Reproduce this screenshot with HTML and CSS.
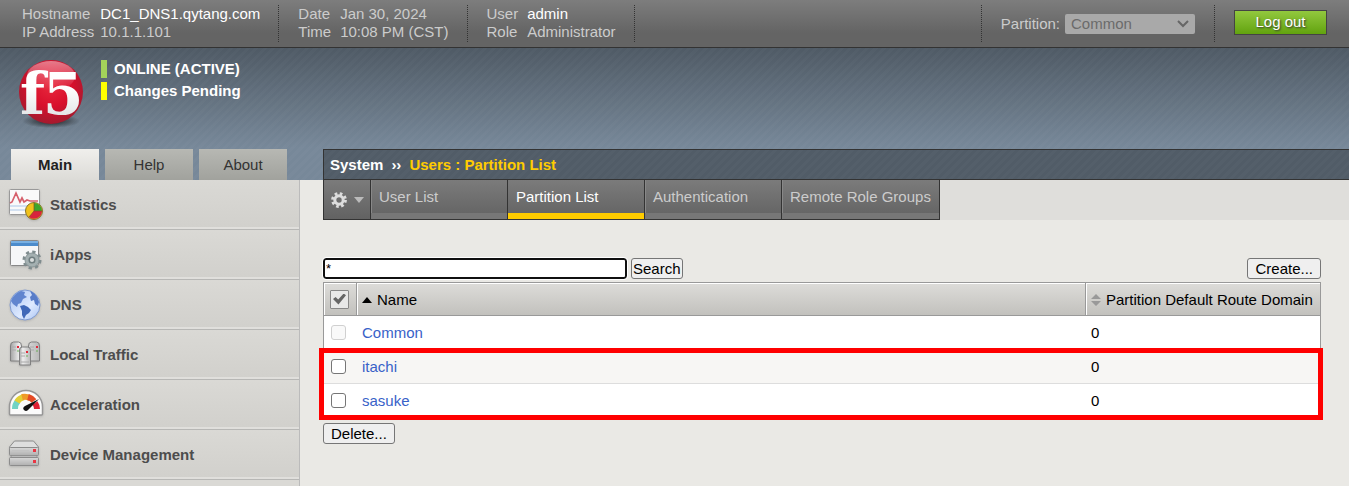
FILE: index.html
```html
<!DOCTYPE html>
<html lang="en">
<head>
<meta charset="utf-8">
<title>System: Users: Partition List</title>
<link rel="stylesheet" href="styles.css">
</head>
<body>
<header class="topbar">
  <dl class="facts host">
    <dt>Hostname</dt><dd class="strong">DC1_DNS1.qytang.com</dd>
    <dt>IP Address</dt><dd>10.1.1.101</dd>
  </dl>
  <dl class="facts">
    <dt>Date</dt><dd>Jan 30, 2024</dd>
    <dt>Time</dt><dd>10:08 PM (CST)</dd>
  </dl>
  <dl class="facts">
    <dt>User</dt><dd class="strong">admin</dd>
    <dt>Role</dt><dd>Administrator</dd>
  </dl>
  <div class="partition">
    <label for="partition">Partition:</label>
    <span class="select-box">
      <select id="partition" disabled><option>Common</option></select>
      <svg class="chevron" width="12" height="8" viewBox="0 0 12 8"><path d="M1 1l5 5 5-5" fill="none" stroke="#666" stroke-width="2"/></svg>
    </span>
  </div>
  <div class="session"><button class="logout" type="button">Log out</button></div>
</header>

<div class="banner">
  <div class="device">
    <svg class="logo" width="76" height="84" viewBox="-2 -8 76 84" role="img" aria-label="f5">
      <defs>
        <radialGradient id="ball" cx="0.5" cy="0.4" r="0.6"><stop offset="0" stop-color="#e8283d"/><stop offset="0.55" stop-color="#d80f2c"/><stop offset="1" stop-color="#a31a2e"/></radialGradient>
        <linearGradient id="gloss" x1="0" y1="0" x2="0" y2="1"><stop offset="0" stop-color="#fff" stop-opacity="0.45"/><stop offset="1" stop-color="#fff" stop-opacity="0"/></linearGradient>
        <linearGradient id="ink" x1="0" y1="0" x2="0" y2="1"><stop offset="0.4" stop-color="#fff"/><stop offset="1" stop-color="#d8dadd"/></linearGradient>
        <radialGradient id="shade"><stop offset="0" stop-color="#111" stop-opacity="0.9"/><stop offset="1" stop-color="#111" stop-opacity="0"/></radialGradient>
      </defs>
      <ellipse cx="34" cy="61" rx="29" ry="7" fill="url(#shade)"/>
      <circle cx="34" cy="32" r="32" fill="url(#ball)"/>
      <ellipse cx="34" cy="16" rx="24" ry="15" fill="url(#gloss)"/>
      <g class="logo-text" fill="url(#ink)"><text x="3" y="54">f</text><text x="26" y="54">5</text></g>
    </svg>
    <div class="status">
      <div class="state online">ONLINE (ACTIVE)</div>
      <div class="state pending">Changes Pending</div>
    </div>
  </div>
  <nav class="side-tabs">
    <a class="side-tab current" href="#">Main</a>
    <a class="side-tab" href="#">Help</a>
    <a class="side-tab" href="#">About</a>
  </nav>
  <div class="crumbs"><span>System</span><span>››</span><span class="here">Users : Partition List</span></div>
</div>

<div class="body">
  <nav class="menu">
    <a class="menu-item" href="#">
      <svg width="36" height="36" viewBox="0 0 36 36"><rect x="1.500" y="2.500" width="30" height="25" rx="1" fill="#fafafa" stroke="#999"/><path d="M2 19h29M2 23h29" stroke="#c6d9ee" stroke-width="1.500"/><path d="M2 16l2-1 4-9 4 9 2-4 2 4 3-2 3 1h8" fill="none" stroke="#d6606c" stroke-width="1.700"/><circle cx="26" cy="24" r="8.500" fill="#f1c21b" stroke="#87752c"/><path d="M26 24v-8a8 8 0 0 1 8 8z" fill="#3da52c"/><path d="M26 24h8a8 8 0 0 1-13 6z" fill="#d8243c"/><path d="M26 16v8h8M26 24l-5 6" fill="none" stroke="#805020" stroke-width=".7"/></svg>
      Statistics</a>
    <a class="menu-item" href="#">
      <svg width="36" height="36" viewBox="0 0 36 36"><rect x="2.500" y="3.500" width="28" height="25" rx="1" fill="#f6f7f8" stroke="#888"/><path d="M3 4h27v5H3z" fill="#4c8ccc"/><path d="M3 4h27v2H3z" fill="#79b0e2"/><circle cx="24" cy="23" r="7.500" fill="none" stroke="#7f8c8e" stroke-width="4" stroke-dasharray="3 2.890"/><circle cx="24" cy="23" r="7" fill="#a4b0b1" stroke="#8a9799"/><circle cx="24" cy="23" r="2.800" fill="#d9dddd" stroke="#6f7d7f" stroke-width="1.500"/></svg>
      iApps</a>
    <a class="menu-item" href="#">
      <svg width="36" height="36" viewBox="0 0 36 36"><defs><linearGradient id="sea" x1="0" y1="0" x2="1" y2="1"><stop offset="0" stop-color="#a9c2f0"/><stop offset=".6" stop-color="#dfeaff"/><stop offset="1" stop-color="#a9c4f2"/></linearGradient></defs><circle cx="17" cy="18" r="15" fill="url(#sea)" stroke="#7f9ad0"/><path d="M3 14c2-5 5-8 10-10l4 1-1 3 3 2-4 2-2 4-3 1-1 3-4-3z" fill="#6185cf"/><path d="M12 19l4-1 4 2 3 3-2 3-3 2-2 4-2-4v-4z" fill="#4068b8"/><path d="M22 4c5 2 8 6 9 11l-1 4-3-2-1-4-3 1-1-4 2-2z" fill="#587cc8"/></svg>
      DNS</a>
    <a class="menu-item" href="#">
      <svg width="36" height="36" viewBox="0 0 36 36"><defs><linearGradient id="metal"><stop offset="0" stop-color="#a4a4a4"/><stop offset=".3" stop-color="#eee"/><stop offset="1" stop-color="#b8b8b8"/></linearGradient></defs><g fill="url(#metal)" stroke="#808080"><path d="M2.500 9q0-4 3-4h5q3 0 3 4v15h-11zM20.500 9q0-4 3-4h5q3 0 3 4v15h-11z"/><path d="M11.500 13q0-3 3-3h5q3 0 3 3v15h-11z"/></g><path d="M4 10h4M4 13h4M22 10h4M22 13h4M13 16h4M13 19h4M13 25h8" stroke="#aaa"/><path d="M9 9h2v2H9zM28 9h2v2h-2zM18 14h2v2h-2z" fill="#e32839"/><path d="M10 13v2M29 13v2M19 18v2" stroke="#6cae5b"/></svg>
      Local Traffic</a>
    <a class="menu-item" href="#">
      <svg width="36" height="36" viewBox="0 0 36 36"><path d="M1.500 27V20a16.500 16.500 0 0 1 33 0v7q0 1-1 1h-31q-1 0-1-1z" fill="#fbfbfb" stroke="#969696" stroke-width="1.500"/><g fill="none" stroke-width="6"><path d="M7 22a11 11 0 0 1 3-8" stroke="#70d3c4"/><path d="M9 15a11 11 0 0 1 7-5" stroke="#e2cf35"/><path d="M14 10a11 11 0 0 1 8 1" stroke="#ef9a28"/><path d="M20 10a11 11 0 0 1 6 4" stroke="#e44b26"/><path d="M27 16a11 11 0 0 1 2 6" stroke="#df1f32"/></g><path d="M31 12L17 19q-3 2-1 4t4 0z" fill="#111"/></svg>
      Acceleration</a>
    <a class="menu-item" href="#">
      <svg width="36" height="36" viewBox="0 0 36 36"><defs><linearGradient id="steel" x1="0" y1="0" x2="0" y2="1"><stop offset="0" stop-color="#d8d8d8"/><stop offset="1" stop-color="#b0b0b0"/></linearGradient></defs><path d="M1.500 10l5-6h19l5 6v3h-29z" fill="#dedede" stroke="#8c8c8c"/><rect x="1.500" y="10.500" width="29" height="8" rx="1" fill="url(#steel)" stroke="#8c8c8c"/><path d="M1.500 22l2-3h25l2 3z" fill="#ddd" stroke="#999"/><rect x="1.500" y="20.500" width="29" height="8" rx="1" fill="url(#steel)" stroke="#8c8c8c"/><path d="M4 13.500h17M4 24.500h17" stroke="#c4c4c4"/><path d="M25 12h3v3h-3zM25 23h3v3h-3z" fill="#e93643"/></svg>
      Device Management</a>
    <div class="menu-rest"></div>
  </nav>

  <main class="main">
    <nav class="section-tabs">
      <button class="gear" type="button" aria-label="Options">
        <svg width="16" height="16" viewBox="0 0 16 16"><circle cx="8" cy="8" r="6.400" fill="none" stroke="#ddd" stroke-width="3" stroke-dasharray="2.600 2.427"/><circle cx="8" cy="8" r="4.200" fill="none" stroke="#ddd" stroke-width="3"/></svg>
        <svg width="10" height="6" viewBox="0 0 10 6"><path d="M0 0h10L5 6z" fill="#bbb"/></svg>
      </button>
      <a class="section-tab" href="#">User List</a>
      <a class="section-tab current" href="#">Partition List</a>
      <a class="section-tab" href="#">Authentication</a>
      <a class="section-tab wide" href="#">Remote Role Groups</a>
    </nav>
    <form class="content">
      <div class="toolbar">
        <input class="search" type="text" value="*" aria-label="Search partitions">
        <button class="btn search-btn" type="button">Search</button>
        <button class="btn create" type="button">Create...</button>
      </div>
      <div class="table-box">
        <table class="list">
          <thead>
            <tr>
              <th class="pick"><input class="all" type="checkbox" checked aria-label="Select all"></th>
              <th><a class="sort" href="#"><svg width="10" height="6" viewBox="0 0 10 6"><path d="M0 6h10L5 0z" fill="#000"/></svg>Name</a></th>
              <th class="domain"><a class="sort" href="#"><svg width="10" height="12" viewBox="0 0 10 12"><path d="M0 5h10L5 0zM0 7h10l-5 5z" fill="#999"/></svg>Partition Default Route Domain</a></th>
            </tr>
          </thead>
          <tbody>
            <tr><td class="pick"><input class="tick" type="checkbox" disabled aria-label="Common"></td><td><a href="#">Common</a></td><td>0</td></tr>
            <tr class="alt"><td class="pick"><input class="tick" type="checkbox" aria-label="itachi"></td><td><a href="#">itachi</a></td><td>0</td></tr>
            <tr><td class="pick"><input class="tick" type="checkbox" aria-label="sasuke"></td><td><a href="#">sasuke</a></td><td>0</td></tr>
          </tbody>
        </table>
        <div class="marker"></div>
      </div>
      <button class="btn delete" type="button">Delete...</button>
    </form>
  </main>
</div>
</body>
</html>
```
FILE: styles.css
```css
* { box-sizing: border-box; }
html, body { height: 100%; }
body {
  margin: 0;
  display: flex;
  flex-direction: column;
  overflow: hidden;
  background: #eae9e5;
  color: #000;
  font: 15px/18px "Liberation Sans", Arial, sans-serif;
}
a { text-decoration: none; color: inherit; }
button, input, select { font: inherit; margin: 0; }

/* Top bar */
.topbar {
  display: flex;
  flex: none;
  height: 48px;
  padding: 5px 22px 5px 3px;
  background: linear-gradient(#7d7d7d, #646464 70%);
  border-bottom: 1px solid #333;
  color: #ccc;
}
.facts {
  display: grid;
  grid-template-columns: auto auto;
  align-content: start;
  column-gap: 9px;
  margin: 0;
  padding: 0 18px 0 19px;
  border-right: 1px dotted #333;
}
.facts.host { column-gap: 6px; }
.facts dd { margin: 0; }
.facts .strong { color: #fff; }
.partition {
  display: flex;
  align-items: center;
  gap: 5px;
  margin-left: auto;
  padding: 0 19px;
  border: dotted #333;
  border-width: 0 1px;
}
.select-box { position: relative; display: flex; }
.select-box select {
  appearance: none;
  width: 130px;
  height: 20px;
  padding: 0 6px;
  border: 0;
  border-radius: 2px;
  background: #a9a9a9;
  color: #6b6b6b;
  opacity: 1;
}
.chevron { position: absolute; right: 6px; top: 6px; }
.session { padding: 5px 0 0 19px; }
.logout {
  width: 93px;
  height: 25px;
  padding: 0 0 2px;
  border: 1px solid #444;
  background: linear-gradient(#92c83e, #62a30f);
  color: #fff;
  text-shadow: 1px 1px 2px #333;
}

/* Banner */
.banner {
  display: grid;
  flex: none;
  grid-template-columns: 323px 1fr;
  grid-template-rows: 101px 31px;
  background:
    repeating-linear-gradient(135deg, rgba(255,255,255,.02) 0 3px, transparent 3px 6px),
    linear-gradient(#4f5a65, #778899 75%);
}
.device { grid-column: 1 / -1; display: flex; padding: 4px 15px; }
.logo { flex: none; }
.logo-text { font: bold 58px "DejaVu Serif", serif; }
.status { display: flex; flex-direction: column; gap: 4px; margin: 8px 0 0 10px; }
.state {
  padding-left: 7px;
  border-left: 6px solid;
  font-weight: bold;
  color: #fff;
}
.online { border-color: #a4d35a; }
.pending { border-color: #ff0; }
.side-tabs { display: flex; gap: 6px; padding-left: 11px; }
.side-tab {
  width: 88px;
  line-height: 31px;
  text-align: center;
  color: #333;
  background: linear-gradient(#b7b8b3, #a1a29d);
}
.side-tab.current { font-weight: bold; color: #222; background: linear-gradient(#f0efec, #dcdbd7); }
.crumbs {
  display: flex;
  align-items: center;
  gap: 8px;
  padding-left: 6px;
  border: solid #333;
  border-width: 1px 0 1px 1px;
  background:
    repeating-linear-gradient(135deg, rgba(255,255,255,.02) 0 3px, transparent 3px 6px),
    #515c67;
  color: #fff;
  font-weight: bold;
}
.here { color: #fc0; }

/* Sidebar */
.body { display: flex; flex: 1; min-height: 0; }
.menu {
  display: flex;
  flex-direction: column;
  flex: none;
  width: 300px;
  border-right: 1px solid #bbb;
}
.menu-item {
  display: flex;
  flex: none;
  align-items: center;
  gap: 6px;
  height: 50px;
  padding-left: 8px;
  border-bottom: 1px solid #b7b7b5;
  box-shadow: inset 0 -2px #e0dfdc;
  background: linear-gradient(#dad9d5, #d1d0cc);
  color: #4d4d4d;
  font-weight: bold;
}
.menu-item svg { filter: drop-shadow(0 1px 1px #9998); }
.menu-rest { flex: 1; background: #dad9d5; }

/* Main column */
.main { flex: 1; min-width: 0; }
.section-tabs { display: flex; height: 40px; margin-left: 23px; background: #dfdedb; }
.gear, .section-tab {
  border: solid #333;
  border-width: 0 1px 1px 0;
  background: linear-gradient(#7b7b7b, #626262);
}
.gear {
  display: flex;
  align-items: center;
  gap: 7px;
  width: 48px;
  padding: 0 0 0 7px;
  border-left-width: 1px;
}
.section-tab {
  width: 137px;
  padding: 8px 8px 0;
  white-space: nowrap;
  color: #ccc;
  box-shadow: inset 0 -6px #777, inset 1px 0 #888;
}
.section-tab.wide { width: 158px; }
.section-tab.current { color: #fff; box-shadow: inset 0 -6px #fc0; }
.content { padding: 38px 28px 0 23px; }
.toolbar { display: flex; gap: 4px; margin-bottom: 3px; }
.search {
  width: 304px;
  height: 21px;
  padding: 0 1px;
  border: 2px solid #101010;
  border-radius: 3px;
  outline: 1px solid #fff;
  background: #fff;
  font-size: 13px;
}
.btn {
  height: 21px;
  padding: 0 7px;
  border: 1px solid #767676;
  border-radius: 3px;
  background: #efefef;
  color: #000;
  line-height: 19px;
}
.search-btn { padding: 0 1px; }
.create { margin-left: auto; }

/* Partition list */
.table-box { position: relative; margin-bottom: 5px; }
.list {
  width: 100%;
  border-collapse: separate;
  border-spacing: 0;
  border: 1px solid #999;
  background: #fff;
}
.list th {
  height: 33px;
  padding: 1px 6px 0 5px;
  border-bottom: 1px solid #999;
  box-shadow: inset 1px 1px #fff;
  background: linear-gradient(#dddcd9, #c2c1bd);
  font-weight: normal;
  text-align: left;
}
.list th + th { border-left: 1px solid #999; }
.list td { height: 34px; padding: 0 6px; border-bottom: 1px solid #ddd; }
.list tr:last-child td { height: 33px; border-bottom: 0; }
.list .pick { width: 32px; padding: 0; }
.list .domain { width: 235px; }
.sort { display: flex; align-items: center; gap: 5px; white-space: nowrap; }
.list td a { color: #3862c8; }
.alt { background: #f7f6f4; }
.tick, .all {
  appearance: none;
  display: block;
  width: 15px;
  height: 15px;
  margin-left: 7px;
  border: 1px solid #767676;
  border-radius: 3px;
  background: #fff;
}
.tick:disabled { border-color: #d0d0d0; background: #f9f9f9; }
.all {
  width: 19px;
  height: 19px;
  margin-left: 6px;
  border: 1px solid #888;
  border-radius: 1px;
  background: #e8e8e8;
}
.all:checked::before {
  content: "";
  display: block;
  width: 13px;
  height: 11px;
  margin: 3px 2px;
  background: #666;
  clip-path: polygon(0 50%, 20% 32%, 40% 55%, 82% 0, 100% 16%, 42% 100%);
}
.marker {
  position: absolute;
  left: -4px;
  right: -2px;
  bottom: -2px;
  height: 72px;
  border: 5px solid #f00;
}
```
